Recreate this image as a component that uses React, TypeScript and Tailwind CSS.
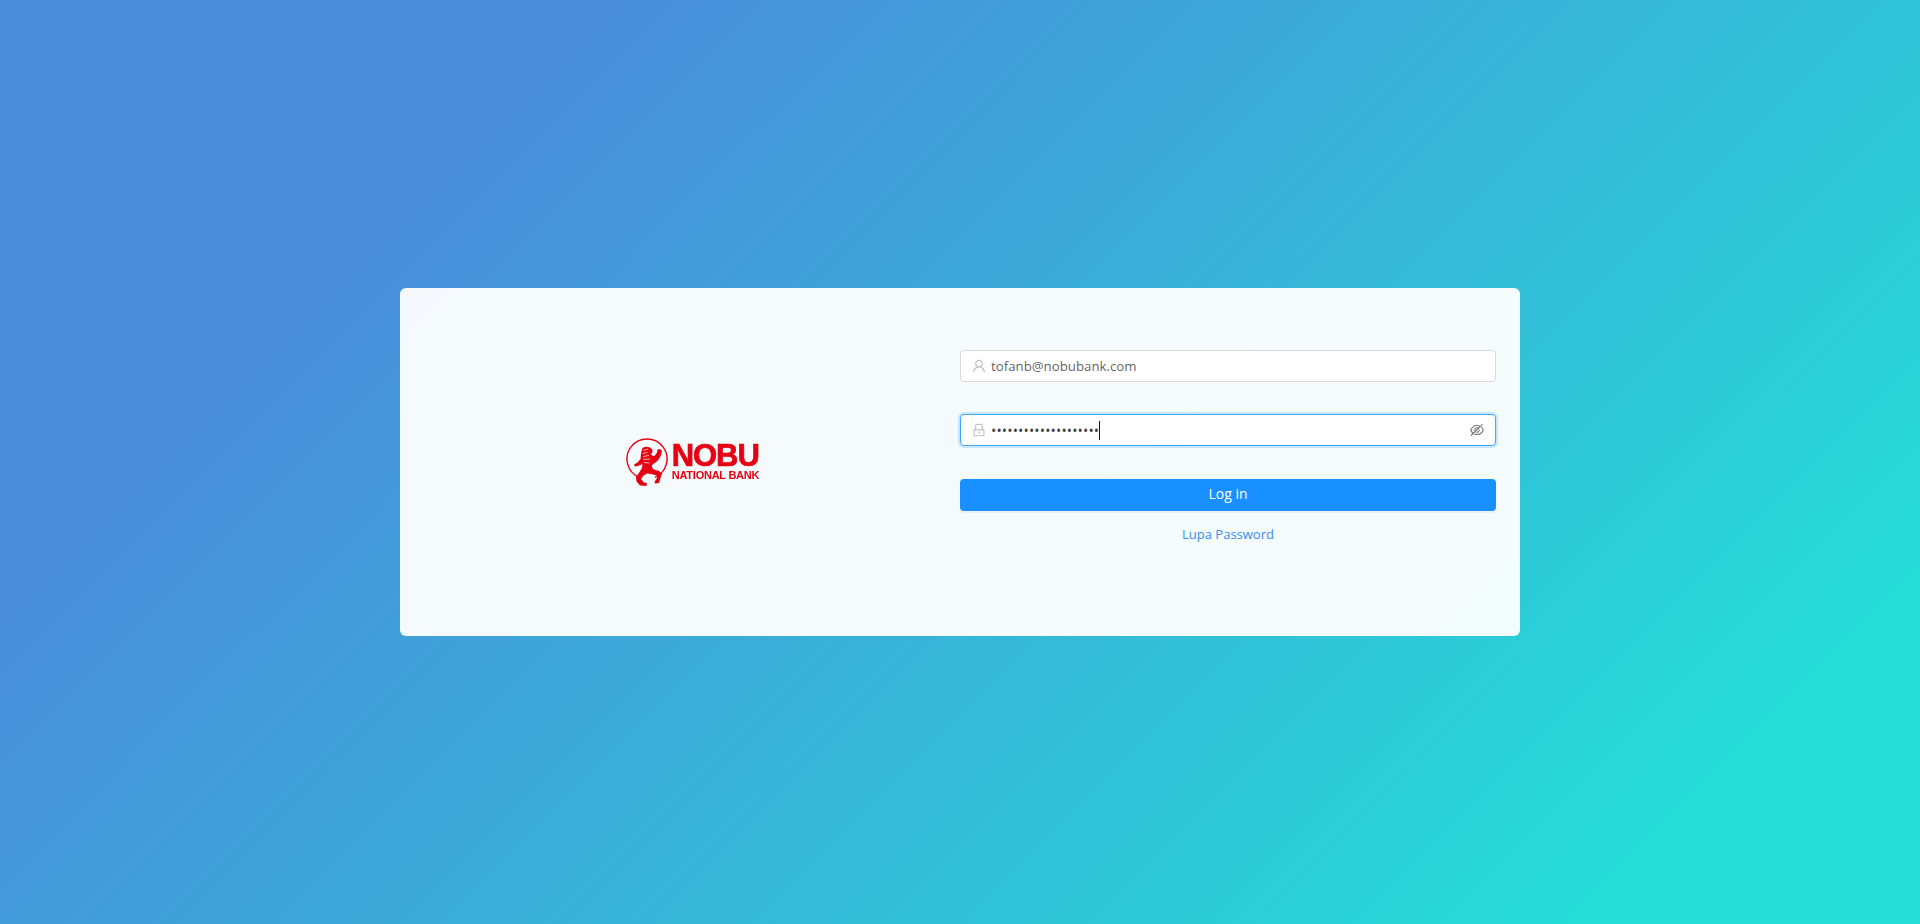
import React from "react";
import { AiOutlineUser, AiOutlineLock, AiOutlineEyeInvisible } from "react-icons/ai";

function Logo() {
  return (
    <div className="flex items-center gap-[3px] text-[#e60012] blur-[0.5px]">
      <svg width="44" height="49" viewBox="3 3 44 49" className="shrink-0">
        <path d="M33 42.3A20 20 0 1 0 17 42.3" fill="none" stroke="#e60012" strokeWidth="1.4" />
        <path
          fill="#e60012"
          d="M20 14C21 12 25 11 28 12.500C30 13.500 31 15.500 30.500 17L29 19C30 21 31.500 21.500 33 20.500L35 17.500L35.500 14.500L38 14L40 16L39 20C37.500 24 35 27 32 28.500L30 30C29.500 32 30.500 33.500 32 34.500L37 36L40 38.500L38.500 43L37 48L33 48.500L32.500 47L35 43L35 40.500L29 39L25 38.500L21 41L19 44L22 47.500L25 48L24.500 51L18 50.500L14.500 46.500L14 42L17.500 37L20 33L20.500 29L16 31L13 31.500L12 29.500L15.500 27.500L18.500 24L19 19Z"
        />
        <path d="M21 15.500l5-1.500M20.500 18.500l5-1M21 21.500l6-1M21 24.500l7-.5M21.500 27.500l6 .5" stroke="#f5faff" strokeWidth="0.7" fill="none" />
      </svg>
      <div className="flex flex-col items-start font-['Liberation_Sans',Arial,sans-serif] font-bold">
        <span className="text-[31px] leading-[24px] tracking-[-1.1px] [-webkit-text-stroke:0.7px_#e60012]">NOBU</span>
        <span className="mt-[2px] text-[11px] leading-[10px] tracking-[-0.25px]">NATIONAL BANK</span>
      </div>
    </div>
  );
}

export default function App() {
  return (
    <div className="flex h-[924px] w-full items-center justify-center bg-[linear-gradient(135deg,#4a8bda_20%,#25dcd6_88%)] font-['Open_Sans','Noto_Sans',sans-serif] text-[14px]">
      <div className="grid h-[348px] w-[1120px] grid-cols-2 rounded-md bg-white/95 p-6">
        <div className="flex items-center justify-center">
          <Logo />
        </div>
        <div className="flex flex-col pt-[38px]">
          <div className="flex h-8 items-center rounded border border-[#d9d9d9] bg-white px-[10px]">
            <AiOutlineUser className="mr-[4px] text-[16px] text-black/25" />
            <input
              readOnly
              value="tofanb@nobubank.com"
              className="h-full min-w-0 flex-1 bg-transparent text-[13.25px] text-black/65 outline-none"
            />
          </div>
          <div className="mt-8 flex h-8 items-center rounded border border-[#40a9ff] bg-white px-[10px] shadow-[0_0_0_2px_rgba(24,144,255,0.2)]">
            <AiOutlineLock className="mr-[4px] text-[16px] text-black/25" />
            <div className="flex h-full flex-1 items-center">
              <span className="text-[14px] tracking-[0.15px] text-black/75">••••••••••••••••••••</span>
              <span className="h-[19px] w-px bg-black/90" />
            </div>
            <AiOutlineEyeInvisible className="text-[16px] text-black/55" />
          </div>
          <button className="mt-[33px] h-8 rounded bg-[#1890ff] pb-[3px] text-white shadow-[0_2px_0_rgba(0,0,0,0.045)]">Log in</button>
          <a className="mt-[14px] text-center text-[13px] leading-[18px] text-[#3b8cf2]">Lupa Password</a>
        </div>
      </div>
    </div>
  );
}
